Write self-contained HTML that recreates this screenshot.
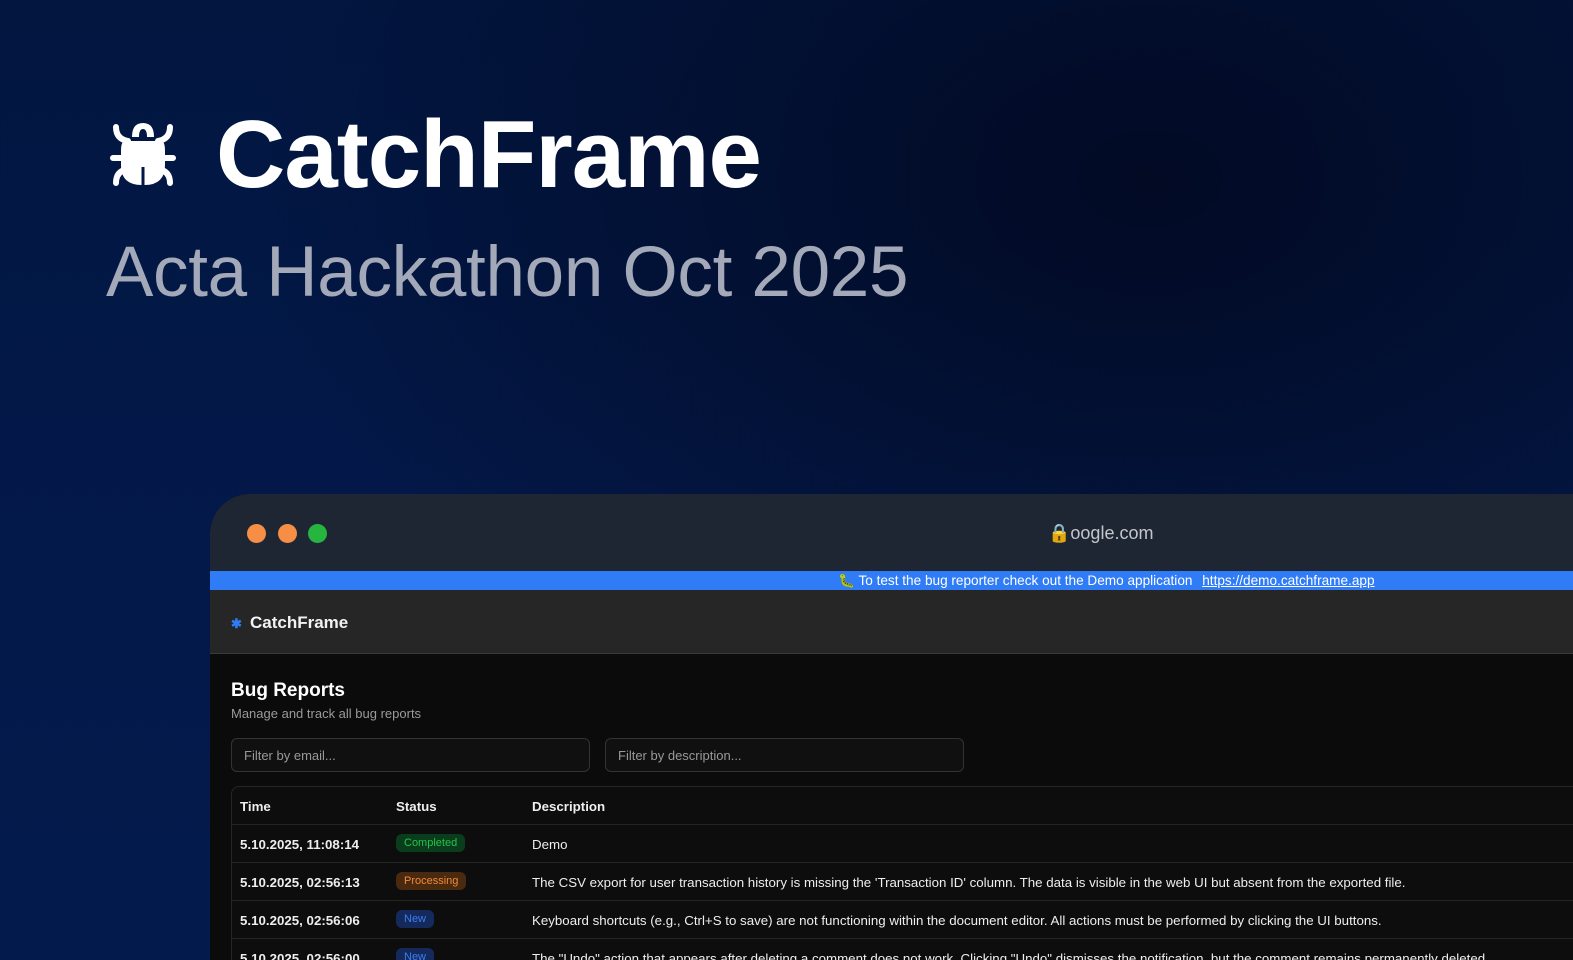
<!DOCTYPE html>
<html><head><meta charset="utf-8"><style>
*{margin:0;padding:0;box-sizing:border-box}
html{width:1573px;height:960px;overflow:hidden}
body{width:1573px;height:960px;overflow:hidden;font-family:"Liberation Sans",sans-serif;
background:radial-gradient(ellipse 900px 600px at 1150px 180px,#020a24 0%,rgba(2,10,36,0) 100%),linear-gradient(180deg,#021640 0%,#03194a 60%,#031a4c 100%);position:relative}
.logo{position:absolute;left:108px;top:121px}
.t1{position:absolute;left:216px;top:100px;font-size:96px;font-weight:bold;color:#fff;letter-spacing:-1px}
.t2{position:absolute;left:106px;top:232px;font-size:71px;color:#a3a9b8;letter-spacing:-0.3px}
.win{position:absolute;left:210px;top:494px;width:1400px;height:466px;border-radius:40px 0 0 0;overflow:hidden;background:#0b0b0b}
.tb{height:77px;background:#1f2633;position:relative}
.dot{position:absolute;top:30px;width:19px;height:19px;border-radius:50%}
.url{position:absolute;left:838px;top:29px;color:#c4c6cb;font-size:18px}
.bar{height:19px;background:#2f7cf6;font-size:13.6px;color:#fff;text-align:left;padding-left:628px;line-height:19px}
.bar a{color:#fff;text-decoration:underline;margin-left:6px}
.hdr{height:64px;background:#262626;border-bottom:1px solid #3a3a3a;position:relative}
.hdr span{position:absolute;left:40px;top:23px;color:#f2f2f2;font-size:17px;font-weight:bold}
.c{padding:0 0 0 21px;position:relative}
h2{position:absolute;left:21px;top:26px;color:#fff;font-size:19px}
.sub{position:absolute;left:21px;top:52px;color:#9a9a9a;font-size:13px}
.in{position:absolute;top:84px;width:359px;height:34px;border:1px solid #333;border-radius:6px;background:#101010;color:#999;font-size:13px;padding:9px 12px}
.tbl{position:absolute;left:21px;top:132px;width:1400px;border:1px solid #262626;border-radius:8px;background:#0d0d0d}
.row{height:38px;border-bottom:1px solid #242424;position:relative;font-size:13.3px;color:#eee}
.row div{position:absolute;top:12px}
.row .a{left:8px;font-weight:bold}.row .b{left:164px}.row .d{left:300px}
.pill{font-size:11px;padding:3px 8px;border-radius:6px;top:9px!important}
</style></head><body>
<svg class="logo" width="70" height="66" viewBox="0 0 70 66"><g fill="#fff" stroke="#fff" stroke-width="6" stroke-linecap="round" fill-rule="evenodd">
<path d="M8 6 Q8 18 20 20 M62 6 Q62 18 50 20 M5 37 H18 M65 37 H52 M8 62 Q8 50 20 48 M62 62 Q62 50 50 48" fill="none"/>
<path stroke="none" d="M24 16 Q24 2 35 2 Q46 2 46 16 Z M31 16 Q31 8 35 8 Q39 8 39 16Z"/>
<path stroke="none" d="M17 20 H53 Q57 20 57 30 V44 Q57 64 36.5 64 V46 H33.5 V64 Q13 64 13 44 V30 Q13 20 17 20Z"/></g></svg>
<div class="t1">CatchFrame</div>
<div class="t2">Acta Hackathon Oct 2025</div>
<div class="win">
<div class="tb"><div class="dot" style="left:37px;background:#f68f45"></div><div class="dot" style="left:68px;background:#f68f45"></div><div class="dot" style="left:98px;background:#26b53f"></div>
<div class="url">🔒oogle.com</div></div>
<div class="bar">🐛 To test the bug reporter check out the Demo application <a>https://demo.catchframe.app</a></div>
<div class="hdr"><span style="left:21px;color:#2f7cf6;font-size:13px;top:26px">✱</span><span>CatchFrame</span></div>
<div class="c">
<h2>Bug Reports</h2><div class="sub">Manage and track all bug reports</div>
<div class="in" style="left:21px">Filter by email...</div><div class="in" style="left:395px">Filter by description...</div>
<div class="tbl">
<div class="row"><div class="a">Time</div><div class="b" style="font-weight:bold">Status</div><div class="d" style="font-weight:bold">Description</div></div>
<div class="row"><div class="a">5.10.2025, 11:08:14</div><div class="b pill" style="background:#0a3d1c;color:#27c24c">Completed</div><div class="d">Demo</div></div>
<div class="row"><div class="a">5.10.2025, 02:56:13</div><div class="b pill" style="background:#4a2a0e;color:#f08a3a">Processing</div><div class="d">The CSV export for user transaction history is missing the 'Transaction ID' column. The data is visible in the web UI but absent from the exported file.</div></div>
<div class="row"><div class="a">5.10.2025, 02:56:06</div><div class="b pill" style="background:#142a5c;color:#3c7cf0">New</div><div class="d">Keyboard shortcuts (e.g., Ctrl+S to save) are not functioning within the document editor. All actions must be performed by clicking the UI buttons.</div></div>
<div class="row"><div class="a">5.10.2025, 02:56:00</div><div class="b pill" style="background:#142a5c;color:#3c7cf0">New</div><div class="d">The "Undo" action that appears after deleting a comment does not work. Clicking "Undo" dismisses the notification, but the comment remains permanently deleted.</div></div>
</div></div></div>
</body></html>
